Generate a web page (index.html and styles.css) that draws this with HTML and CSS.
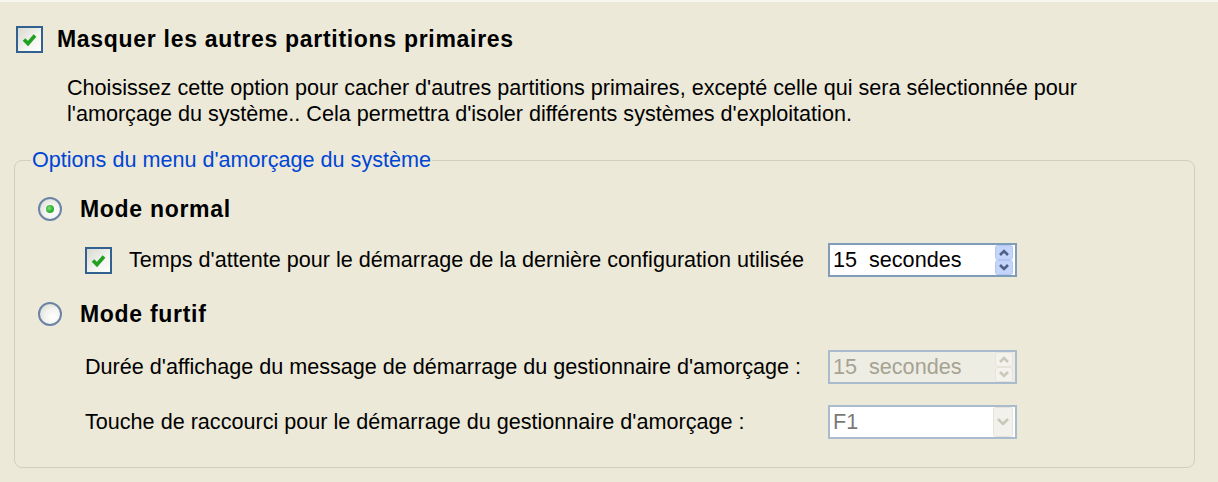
FILE: index.html
```html
<!DOCTYPE html>
<html lang="fr">
<head>
<meta charset="utf-8">
<title>Options</title>
<link rel="stylesheet" href="styles.css">
</head>
<body>
<div class="page">
  <div class="title-row">
    <span class="cb"><svg viewBox="0 0 23 23" width="23" height="23"><polyline points="6,11.5 10,15.5 17,7.5" fill="none" stroke="#21A121" stroke-width="3.6"/></svg></span>
    <span class="title">Masquer les autres partitions primaires</span>
  </div>
  <p class="desc">Choisissez cette option pour cacher d'autres partitions primaires, excepté celle qui sera sélectionnée pour<br>l'amorçage du système.. Cela permettra d'isoler différents systèmes d'exploitation.</p>

  <fieldset class="group">
    <legend>Options du menu d'amorçage du système</legend>

    <div class="radio-row">
      <span class="radio on"></span>
      <span class="bold">Mode normal</span>
    </div>

    <div class="opt-row first">
      <div class="opt-label check">
        <span class="cb"><svg viewBox="0 0 23 23" width="23" height="23"><polyline points="6,11.5 10,15.5 17,7.5" fill="none" stroke="#21A121" stroke-width="3.6"/></svg></span>
        <span>Temps d'attente pour le démarrage de la dernière configuration utilisée</span>
      </div>
      <div class="spin">
        <span class="spin-value">15&nbsp;&nbsp;secondes</span>
        <svg class="spin-btn" viewBox="0 0 18 30" width="18" height="30">
          <rect x="0.5" y="0.5" width="17" height="14" rx="2" fill="#C4D5FC" stroke="#B3C6F0"/>
          <rect x="0.5" y="15.5" width="17" height="14" rx="2" fill="#C4D5FC" stroke="#B3C6F0"/>
          <polyline points="5,10 9,6 13,10" fill="none" stroke="#4D6185" stroke-width="2.6"/>
          <polyline points="5,20 9,24 13,20" fill="none" stroke="#4D6185" stroke-width="2.6"/>
        </svg>
      </div>
    </div>

    <div class="radio-row second">
      <span class="radio"></span>
      <span class="bold">Mode furtif</span>
    </div>

    <div class="opt-row third">
      <div class="opt-label">Durée d'affichage du message de démarrage du gestionnaire d'amorçage :</div>
      <div class="spin disabled">
        <span class="spin-value">15&nbsp;&nbsp;secondes</span>
        <svg class="spin-btn" viewBox="0 0 18 30" width="18" height="30">
          <rect x="0.5" y="0.5" width="17" height="14" rx="2" fill="#F3F2EC" stroke="#E6E4DA"/>
          <rect x="0.5" y="15.5" width="17" height="14" rx="2" fill="#F3F2EC" stroke="#E6E4DA"/>
          <polyline points="5,10 9,6 13,10" fill="none" stroke="#CAC8BB" stroke-width="2.6"/>
          <polyline points="5,20 9,24 13,20" fill="none" stroke="#CAC8BB" stroke-width="2.6"/>
        </svg>
      </div>
    </div>

    <div class="opt-row fourth">
      <div class="opt-label">Touche de raccourci pour le démarrage du gestionnaire d'amorçage :</div>
      <div class="spin combo">
        <span class="spin-value">F1</span>
        <svg class="spin-btn" viewBox="0 0 20 30" width="20" height="30">
          <rect x="0.5" y="0.5" width="19" height="29" rx="2" fill="#F2F1EB" stroke="#E6E4DA"/>
          <polyline points="5,12 10,17 15,12" fill="none" stroke="#CAC8BB" stroke-width="2.6"/>
        </svg>
      </div>
    </div>
  </fieldset>
</div>
</body>
</html>
```

FILE: styles.css
```css
html, body {
  margin: 0;
  background: #ECE9D8;
}

body {
  font-family: "Liberation Sans", Arial, sans-serif;
  font-size: 21.6px;
  color: #000;
}

.page {
  border-top: 2px solid #F6F5EF;
  padding: 0 23px 0 14px;
}

.title-row {
  display: flex;
  align-items: center;
  gap: 14px;
  height: 27px;
  margin: 24px 0 0 2px;
}

.cb {
  flex: none;
  width: 27px;
  height: 27px;
  box-sizing: border-box;
  border: 2px solid #32608F;
  background: linear-gradient(135deg, #D9D9D2 0%, #F4F4F0 60%, #FFFFFF 100%);
  display: flex;
  align-items: center;
  justify-content: center;
}

.title,
.bold {
  font-weight: bold;
  font-size: 23px;
  letter-spacing: 0.7px;
}

.desc {
  margin: 22px 0 0 53px;
  line-height: 26px;
}

.group {
  margin: 21px 0 0;
  padding: 25px 0 28px 23px;
  border: 1px solid #D0D0BF;
  border-radius: 8px;
  min-width: 0;
}

.group legend {
  color: #0046D5;
  line-height: 24px;
  padding: 0 1px;
  margin-left: -7px;
}

.radio-row {
  display: flex;
  align-items: center;
  gap: 18px;
  height: 24px;
}

.radio-row.second {
  margin-top: 25px;
}

.radio {
  flex: none;
  position: relative;
  width: 24px;
  height: 24px;
  box-sizing: border-box;
  border-radius: 50%;
  border: 2px solid #6B84A6;
  background: radial-gradient(circle at 65% 65%, #FFFFFF 0%, #F2F2EE 45%, #D6D6CE 100%);
}

.radio.on::after {
  content: "";
  position: absolute;
  left: 6px;
  top: 6px;
  width: 8px;
  height: 8px;
  border-radius: 50%;
  background: radial-gradient(circle at 40% 40%, #7CE07C 0%, #34B034 55%, #1E8E1E 100%);
}

.opt-row {
  display: grid;
  grid-template-columns: 743px 189px;
  align-items: center;
  height: 34px;
  margin-left: 47px;
}

.opt-row.first { margin-top: 22px; }
.opt-row.third { margin-top: 24px; }
.opt-row.fourth { margin-top: 21px; }

.opt-label {
  white-space: nowrap;
}

.opt-label.check {
  display: flex;
  align-items: center;
  gap: 17px;
}

.spin {
  display: flex;
  align-items: center;
  height: 34px;
  box-sizing: border-box;
  border: 2px solid #7F9DB9;
  background: #FFFFFF;
  padding: 0 2px 0 3px;
}

.spin-value {
  flex: 1;
  white-space: nowrap;
}

.spin-btn {
  flex: none;
  display: block;
}

.spin.disabled {
  background: #EEEDE4;
  border-color: #A9BBCD;
  color: #A6A292;
}

.spin.combo {
  border-color: #A9BBCD;
  color: #7A7A74;
}
```
